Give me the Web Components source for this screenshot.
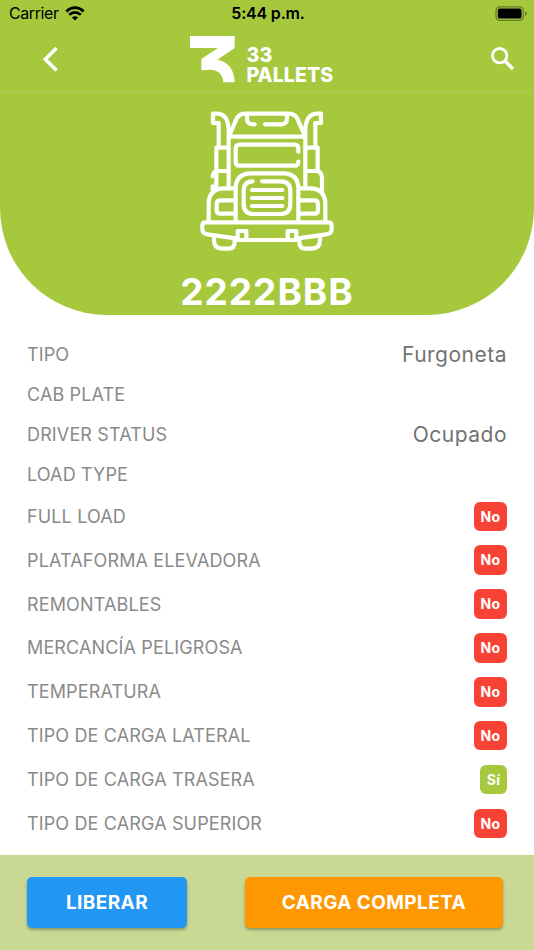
<!DOCTYPE html>
<html lang="es">
<head>
<meta charset="utf-8">
<title>33 Pallets</title>
<style>
  body {
    margin: 0;
    background: white;
    font-family: Inter, "Liberation Sans", sans-serif;
    --green: #a5c83d;
    --red: #f64336;
  }
</style>
</head>
<body>
<truck-screen></truck-screen>

<script>
(function () {
  // Small helper: attach an open root and fill it
  function fill (el, html) {
    el.attachShadow({ mode: 'open' }).innerHTML = html
  }

  // ------------------
  // Phone status bar
  // ------------------
  class StatusBar extends HTMLElement {
    constructor () {
      super()
      fill(this, `
        <style>
          :host { display: grid; flex: none; grid-template-columns: 1fr auto 1fr; align-items: center; height: 27px; padding: 0 7px 0 9px; color: black; font-size: 16px; line-height: 27px; }
          .left { display: flex; align-items: center; gap: 6px; letter-spacing: -0.4px; }
          .time { font-weight: 600; letter-spacing: -0.2px; }
          .battery { justify-self: end; }
          svg { display: block; }
        </style>
        <div class="left"><span>Carrier</span>
          <svg width="20" height="15" viewBox="0 0 20 15" fill="none" stroke="black" stroke-width="2.7">
            <path d="M1.3 5.4 Q10 -2 18.7 5.4"/>
            <path d="M4.2 8.8 Q10 4 15.8 8.8"/>
            <path d="M6.9 11.4 Q10 9 13.1 11.4 L10 14.4 Z" fill="black" stroke="none"/>
          </svg>
        </div>
        <span class="time">5:44 p.m.</span>
        <svg class="battery" width="32" height="16" viewBox="0 0 32 16">
          <rect x="1" y="0.8" width="27.4" height="13.6" rx="4" fill="none" stroke="#64792a" stroke-width="1.2"/>
          <rect x="2.8" y="2.6" width="23.8" height="10" rx="2.2" fill="black"/>
          <path d="M30.2 5.3 Q32 5.9 32 7.6 Q32 9.3 30.2 9.9 Z" fill="#64792a"/>
        </svg>
      `)
    }
  }
  customElements.define('status-bar', StatusBar)

  // ------------------
  // Logo: mark and two lines of text
  // ------------------
  class PalletsLogo extends HTMLElement {
    constructor () {
      super()
      fill(this, `
        <style>
          :host { display: flex; gap: 11.5px; color: white; }
          svg { display: block; width: 45px; height: 47px; }
          .name { padding-top: 9px; font-size: 19.5px; font-weight: 800; line-height: 20px; letter-spacing: 0.1px; }
          .name div { white-space: nowrap; }
        </style>
        <svg viewBox="0 0 135 141" fill="white">
          <path d="M0 0 H134 V36 L82 71 C114 77 134 101 134 139 H100 C99 115 83 101 60 101 Q47 101 34 103 V69 L84 36 H0 Z"/>
        </svg>
        <div class="name"><div>33</div><div>PALLETS</div></div>
      `)
    }
  }
  customElements.define('pallets-logo', PalletsLogo)

  // ------------------
  // Navigation bar: back, logo, search
  // ------------------
  class NavBar extends HTMLElement {
    constructor () {
      super()
      fill(this, `
        <style>
          :host { display: grid; flex: none; grid-template-columns: 147px auto 1fr; box-sizing: border-box; height: 66px; padding: 9px 19px 0 43px; border-bottom: 1px solid #aecb62; }
          svg { display: block; }
          .back { margin-top: 10px; }
          .search { margin-top: 11px; justify-self: end; }
        </style>
        <svg class="back" width="16" height="26" viewBox="0 0 16 26" fill="none" stroke="white" stroke-width="3.6">
          <path d="M13.6 1.9 L2.3 13.2 L13.6 24.5"/>
        </svg>
        <pallets-logo></pallets-logo>
        <svg class="search" width="24" height="24" viewBox="0 0 24 24" fill="none" stroke="white">
          <circle cx="8.7" cy="8.7" r="7.2" stroke-width="2.8"/>
          <path d="M14 14 L22 22" stroke-width="3.4"/>
        </svg>
      `)
    }
  }
  customElements.define('nav-bar', NavBar)

  // ------------------
  // Front view of the truck, line icon
  // ------------------
  class TruckIcon extends HTMLElement {
    constructor () {
      super()
      fill(this, `
        <style>
          :host { display: block; flex: none; width: 154px; height: 142px; }
          svg { display: block; }
        </style>
        <svg width="154" height="142" viewBox="0 30 462 426" fill="none" stroke="white" stroke-width="12.5" stroke-linecap="round" stroke-linejoin="round">
          <!-- exhaust stacks -->
          <path d="M116 258 V86 Q113 43 82 41 H69 V69 H86 V140"/>
          <path d="M346 258 V86 Q349 43 380 41 H393 V69 H376 V140"/>
          <path d="M114 143 H79 V260 M348 143 H383 V213"/>
          <path d="M114 213 H86 Q69 213 68 229 M68 259 V270 M348 213 H376 Q396 213 396 235 V272"/>
          <!-- roof -->
          <path d="M119 104 L139 58 Q146 42 164 41 H298 Q316 42 323 58 L343 104 M118 110 H344"/>
          <path d="M171 44 V55 Q171 73 188 73 H194 M225 73 H274 Q291 73 291 55 V44"/>
          <!-- windshield -->
          <path d="M325 155 V146 Q325 134 313 134 H149 Q137 134 137 146 V185 Q137 197 149 197 H313 Q325 197 325 185"/>
          <!-- hood and grille -->
          <path d="M137 361 V266 Q137 221 182 220 H280 Q325 221 325 266 V361"/>
          <path d="M188 244 Q161 244 161 273 V312 Q161 342 191 342 H271 Q301 342 301 312 V273 Q301 244 272 244 H216"/>
          <path d="M186 270 H277 M186 294 H277 M186 318 H277"/>
          <!-- fenders and headlamps -->
          <path d="M56 360 V311 Q57 266 101 265 H132 M406 360 V311 Q405 266 361 265 H330"/>
          <path d="M132 301 H91 Q80 301 80 312 V330 Q80 341 91 341 H132 M330 301 H373 Q384 301 384 312 V330 Q384 341 373 341 H330"/>
          <!-- bumper -->
          <path d="M143 416 L53 403 Q37 401 37 387 V377 Q37 367 47 367 H415 Q425 367 425 377 V387 Q425 401 409 403 L319 416"/>
          <path d="M143 416 V393 H169 V416 M293 416 V393 H319 V416 M143 420 H319"/>
          <path d="M72 411 V421 Q72 446 97 446 H115 Q134 446 134 425 V421 M390 411 V421 Q390 446 365 446 H347 Q328 446 328 425 V421"/>
        </svg>
      `)
    }
  }
  customElements.define('truck-icon', TruckIcon)

  // ------------------
  // Green header with the plate, rounded at the bottom
  // ------------------
  class TruckHeader extends HTMLElement {
    constructor () {
      super()
      fill(this, `
        <style>
          :host { display: flex; flex: none; flex-direction: column; height: 314.5px; background: var(--green); border-radius: 0 0 107px 107px; color: white; }
          truck-icon { align-self: center; margin-top: 17px; }
          .plate { margin-top: 17px; text-align: center; font-size: 37px; font-weight: 700; line-height: 46px; letter-spacing: 1px; }
        </style>
        <status-bar></status-bar>
        <nav-bar></nav-bar>
        <truck-icon></truck-icon>
        <div class="plate"><slot></slot></div>
      `)
    }
  }
  customElements.define('truck-header', TruckHeader)

  // ------------------
  // Label on the left, value or badge on the right
  // ------------------
  class DataRow extends HTMLElement {
    constructor () {
      super()
      fill(this, `
        <style>
          :host { display: flex; justify-content: space-between; align-items: center; height: 40px; }
          :host([flag]) { height: 43.87px; }
          .label { color: #8a8a8a; font-size: 18px; letter-spacing: 0.14px; }
          .value { color: #727272; font-size: 21px; letter-spacing: 0.5px; }
        </style>
        <span class="label">${this.getAttribute('label')}</span>
        <span class="value"><slot></slot></span>
      `)
    }
  }

  class FlagBadge extends HTMLElement {
    constructor () {
      super()
      fill(this, `
        <style>
          :host { display: block; box-sizing: border-box; height: 29.6px; padding: 0 6.8px; border-radius: 6px; background: var(--red); color: white; font-size: 14px; font-weight: 700; line-height: 29.6px; letter-spacing: 0.2px; }
          :host([on]) { background: var(--green); }
        </style>
        <slot></slot>
      `)
    }
  }
  customElements.define('flag-badge', FlagBadge)

  // ------------------
  // Raised button of the bottom bar
  // ------------------
  class ActionButton extends HTMLElement {
    constructor () {
      super()
      fill(this, `
        <style>
          :host { display: block; }
          button { display: block; width: 100%; height: 51.5px; padding: 0; border: 0; border-radius: 5px; background: var(--fill); box-shadow: 0 2px 3px rgba(0, 0, 0, 0.3); color: white; font: 700 19px/51.5px Inter, "Liberation Sans", sans-serif; letter-spacing: 0.4px; }
        </style>
        <button><slot></slot></button>
      `)
    }
  }
  customElements.define('action-button', ActionButton)

  // ------------------
  // The whole screen
  // ------------------
  const info = [
    ['TIPO', 'Furgoneta'],
    ['CAB PLATE', ''],
    ['DRIVER STATUS', 'Ocupado'],
    ['LOAD TYPE', '']
  ]
  const flags = [
    ['FULL LOAD', false],
    ['PLATAFORMA ELEVADORA', false],
    ['REMONTABLES', false],
    ['MERCANCÍA PELIGROSA', false],
    ['TEMPERATURA', false],
    ['TIPO DE CARGA LATERAL', false],
    ['TIPO DE CARGA TRASERA', true],
    ['TIPO DE CARGA SUPERIOR', false]
  ]

  class TruckScreen extends HTMLElement {
    constructor () {
      super()
      var rows = ''
      info.forEach(([label, value]) => {
        rows += `<data-row label="${label}">${value}</data-row>`
      })
      flags.forEach(([label, on]) => {
        rows += `<data-row flag label="${label}"><flag-badge ${on ? 'on' : ''}>${on ? 'Sí' : 'No'}</flag-badge></data-row>`
      })

      fill(this, `
        <style>
          :host { display: flex; flex-direction: column; width: 534px; height: 950px; overflow: hidden; }
          main { flex: 1; padding: 19.9px 27px 0; }
          footer { display: grid; flex: none; grid-template-columns: 160px 258px; gap: 58px; box-sizing: border-box; height: 95.5px; padding: 22px 31px 0 27px; background: #c9d994; }
          .free { --fill: #2196f3; }
          .full { --fill: #ff9800; }
        </style>
        <truck-header>2222BBB</truck-header>
        <main>${rows}</main>
        <footer>
          <action-button class="free">LIBERAR</action-button>
          <action-button class="full">CARGA COMPLETA</action-button>
        </footer>
      `)
    }
  }
  customElements.define('data-row', DataRow)
  customElements.define('truck-screen', TruckScreen)
})()
</script>
</body>
</html>
